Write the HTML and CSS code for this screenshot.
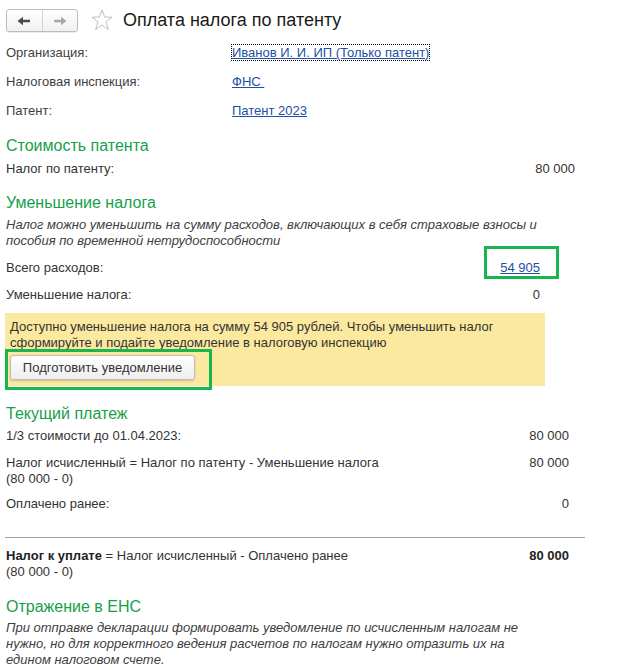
FILE: index.html
```html
<!DOCTYPE html>
<html lang="ru">
<head>
<meta charset="utf-8">
<title>Оплата налога по патенту</title>
<link rel="stylesheet" href="styles.css">
</head>
<body>
<div class="page">
  <div class="toolbar">
    <div class="nav">
      <span class="nav-btn nav-back">
        <svg width="14" height="10" viewBox="0 0 14 10"><path d="M0.5 5 L6 0.8 L6 3.8 L13 3.8 L13 6.2 L6 6.2 L6 9.2 Z" fill="#4a4a4a"/></svg>
      </span>
      <span class="nav-btn nav-fwd">
        <svg width="14" height="10" viewBox="0 0 14 10"><path d="M13.5 5 L8 0.8 L8 3.8 L1 3.8 L1 6.2 L8 6.2 L8 9.2 Z" fill="#a8a8a8"/></svg>
      </span>
    </div>
    <svg class="star" width="22" height="22" viewBox="0 0 22 22"><polygon points="11,1 13.6,8 21,8.2 15.1,12.8 17.3,20.5 11,16 4.7,20.5 6.9,12.8 1,8.2 8.4,8" fill="none" stroke="#bfbfbf" stroke-width="1" stroke-linejoin="round"/></svg>
    <h1 class="title">Оплата налога по патенту</h1>
  </div>

  <div class="fields">
    <div class="field"><span class="label">Организация:</span><span><a class="link focused" href="#">Иванов И. И. ИП (Только патент)</a></span></div>
    <div class="field"><span class="label">Налоговая инспекция:</span><span><a class="link" href="#">ФНС&nbsp;</a></span></div>
    <div class="field"><span class="label">Патент:</span><span><a class="link" href="#">Патент 2023</a></span></div>
  </div>

  <h2 class="heading h-cost">Стоимость патента</h2>
  <div class="row row-cost"><span>Налог по патенту:</span><span>80 000</span></div>

  <h2 class="heading h-reduce">Уменьшение налога</h2>
  <p class="note note-reduce">Налог можно уменьшить на сумму расходов, включающих в себя страховые взносы и<br>пособия по временной нетрудоспособности</p>
  <div class="reduce-rows">
    <div class="row row-reduce row-total"><span>Всего расходов:</span><span class="val-wrap"><a class="link" href="#">54 905</a><span class="mark mark-link"></span></span></div>
    <div class="row row-reduce"><span>Уменьшение налога:</span><span>0</span></div>
  </div>

  <div class="notice">
    <p class="notice-text">Доступно уменьшение налога на сумму 54 905 рублей. Чтобы уменьшить налог<br>сформируйте и подайте уведомление в налоговую инспекцию</p>
    <div class="btn-wrap">
      <button class="btn" type="button">Подготовить уведомление</button>
      <span class="mark mark-btn"></span>
    </div>
  </div>

  <h2 class="heading h-current">Текущий платеж</h2>
  <div class="row row-pay row-third"><span>1/3 стоимости до 01.04.2023:</span><span>80 000</span></div>
  <div class="row row-pay row-calc"><span>Налог исчисленный = Налог по патенту - Уменьшение налога<br>(80 000 - 0)</span><span>80 000</span></div>
  <div class="row row-pay row-paid"><span>Оплачено ранее:</span><span>0</span></div>
  <div class="separator"></div>
  <div class="row row-pay row-due"><span><b>Налог к уплате</b> = Налог исчисленный - Оплачено ранее<br>(80 000 - 0)</span><span><b>80 000</b></span></div>

  <h2 class="heading h-ens">Отражение в ЕНС</h2>
  <p class="note note-ens">При отправке декларации формировать уведомление по исчисленным налогам не<br>нужно, но для корректного ведения расчетов по налогам нужно отразить их на<br>едином налоговом счете.</p>
</div>
</body>
</html>
```

FILE: styles.css
```css
html, body {
  margin: 0;
  padding: 0;
  background: #ffffff;
}

body {
  font-family: "Liberation Sans", Arial, sans-serif;
  font-size: 13px;
  color: #333333;
}

.page {
  width: 625px;
  height: 670px;
  overflow: hidden;
}

/* toolbar */
.toolbar {
  display: flex;
  align-items: flex-start;
  height: 29px;
  padding: 9px 0 0 6px;
}

.nav {
  display: flex;
  width: 72px;
  height: 23px;
  box-sizing: border-box;
  border: 1px solid #bcbcbc;
  border-radius: 3px;
  background: linear-gradient(#ffffff, #f1f1f1);
  box-shadow: 0 1px 1px rgba(0,0,0,0.08);
}

.nav-btn {
  flex: 1;
  display: flex;
  align-items: center;
  justify-content: center;
}

.nav-back {
  border-right: 1px solid #d4d4d4;
}

.star {
  margin-left: 13px;
  margin-top: 0;
}

.title {
  margin: 0 0 0 10px;
  font-size: 18px;
  font-weight: normal;
  line-height: 23px;
  color: #1a1a1a;
}

/* top fields */
.fields {
  padding-left: 6px;
}

.field {
  display: grid;
  grid-template-columns: 226px auto;
  height: 29px;
  line-height: 29px;
}

.label {
  color: #404040;
}

.link {
  color: #1c4fa6;
  text-decoration: underline;
}

.focused {
  outline: 1px dotted #000000;
  outline-offset: 0;
}

/* headings */
.heading {
  margin: 0;
  padding-left: 6px;
  font-size: 16px;
  font-weight: normal;
  line-height: 22px;
  color: #17a04a;
}

.h-cost { margin-top: 10px; }
.h-reduce { margin-top: 11px; }
.h-current { margin-top: 17px; }
.h-ens { margin-top: 16px; }

/* generic value rows */
.row {
  display: flex;
  justify-content: space-between;
  margin-left: 6px;
}

.row-cost {
  width: 569px;
  height: 24px;
  line-height: 24px;
}

.note {
  margin: 0;
  padding-left: 6px;
  font-style: italic;
  line-height: 16px;
  color: #404040;
}

.note-reduce { margin-top: 3px; }
.note-ens { margin-top: 2px; }

.reduce-rows {
  margin-top: 5px;
}

.row-reduce {
  width: 534px;
  height: 27px;
  line-height: 27px;
}

.val-wrap {
  position: relative;
}

.mark {
  position: absolute;
  border: 3px solid #19b550;
  box-sizing: border-box;
  pointer-events: none;
}

.mark-link {
  left: -16px;
  top: -8px;
  width: 75px;
  height: 33px;
}

/* notice */
.notice {
  margin: 5px 0 0 5px;
  width: 540px;
  box-sizing: border-box;
  padding: 6px 5px 6px 5px;
  background: #fbe9a0;
}

.notice-text {
  margin: 0;
  line-height: 16px;
  color: #333333;
}

.btn-wrap {
  position: relative;
  margin-top: 4px;
  display: flex;
}

.btn {
  width: 185px;
  height: 25px;
  padding: 0;
  font-family: "Liberation Sans", Arial, sans-serif;
  font-size: 13px;
  color: #333333;
  border: 1px solid #bdbdbd;
  border-radius: 3px;
  background: linear-gradient(#ffffff, #eeeeee);
  box-shadow: 0 1px 2px rgba(0,0,0,0.18);
}

.mark-btn {
  left: -5px;
  top: -6px;
  width: 207px;
  height: 41px;
}

/* current payment */
.row-pay {
  width: 563px;
  line-height: 16px;
}

.row-third {
  height: 22px;
  line-height: 22px;
}

.row-calc {
  margin-top: 8px;
}

.row-paid {
  margin-top: 6px;
  height: 22px;
  line-height: 22px;
}

.separator {
  margin: 22px 0 0 5px;
  width: 580px;
  height: 1px;
  background: #a6a6a6;
}

.row-due {
  margin-top: 10px;
}

.row-due b {
  color: #222222;
}
```
